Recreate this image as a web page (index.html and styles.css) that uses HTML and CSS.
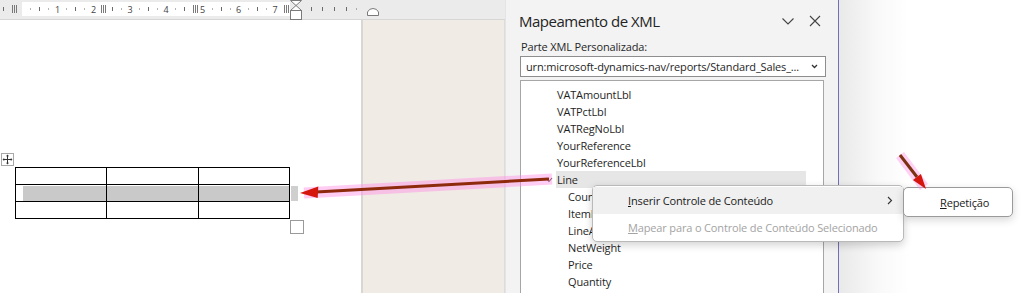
FILE: index.html
```html
<!DOCTYPE html>
<html lang="pt">
<head>
<meta charset="utf-8">
<title>Mapeamento de XML</title>
<link rel="stylesheet" href="styles.css">
</head>
<body>
<div class="app">
  <div class="doc">
    <div class="ruler">
      <svg width="505" height="20" viewBox="0 0 505 20">
        <rect x="0" y="0" width="505" height="20" fill="#ebebeb"/>
        <rect x="22" y="2" width="268" height="14" fill="#ffffff"/>
        <line x1="0" y1="19.5" x2="505" y2="19.5" stroke="#d6d6d6"/>
        <g stroke="#6a6a6a" stroke-width="1">
          <line x1="3.5" y1="7" x2="3.5" y2="11"/>
          <line x1="39.5" y1="7" x2="39.5" y2="11"/>
          <line x1="75.5" y1="7" x2="75.5" y2="11"/>
          <line x1="112.5" y1="7" x2="112.5" y2="11"/>
          <line x1="148.5" y1="7" x2="148.5" y2="11"/>
          <line x1="184.5" y1="7" x2="184.5" y2="11"/>
          <line x1="221.5" y1="7" x2="221.5" y2="11"/>
          <line x1="257.5" y1="7" x2="257.5" y2="11"/>
          <line x1="311.5" y1="7" x2="311.5" y2="11"/>
          <line x1="322.5" y1="7" x2="322.5" y2="11"/>
          <line x1="334.5" y1="7" x2="334.5" y2="11"/>
          <line x1="346.5" y1="7" x2="346.5" y2="11"/>
        </g>
        <g fill="#6a6a6a">
          <rect x="30" y="8.5" width="1" height="1"/>
          <rect x="48" y="8.5" width="1" height="1"/>
          <rect x="66" y="8.5" width="1" height="1"/>
          <rect x="84" y="8.5" width="1" height="1"/>
          <rect x="121" y="8.5" width="1" height="1"/>
          <rect x="139" y="8.5" width="1" height="1"/>
          <rect x="157" y="8.5" width="1" height="1"/>
          <rect x="175" y="8.5" width="1" height="1"/>
          <rect x="212" y="8.5" width="1" height="1"/>
          <rect x="230" y="8.5" width="1" height="1"/>
          <rect x="248" y="8.5" width="1" height="1"/>
          <rect x="266" y="8.5" width="1" height="1"/>
          <rect x="356" y="8.5" width="1" height="1"/>
        </g>
        <g class="rnum">
          <text x="57.5" y="12.5">1</text>
          <text x="93.5" y="12.5">2</text>
          <text x="130" y="12.5">3</text>
          <text x="166" y="12.5">4</text>
          <text x="202.5" y="12.5">5</text>
          <text x="238.5" y="12.5">6</text>
          <text x="275" y="12.5">7</text>
        </g>
        <g fill="#7a7a7a">
          <rect x="12" y="5" width="1" height="8"/><rect x="14" y="5" width="1" height="8"/><rect x="16" y="5" width="1" height="8"/>
          <rect x="101" y="5" width="1" height="8"/><rect x="103" y="5" width="1" height="8"/><rect x="105" y="5" width="1" height="8"/>
          <rect x="193" y="5" width="1" height="8"/><rect x="195" y="5" width="1" height="8"/><rect x="197" y="5" width="1" height="8"/>
          <rect x="284" y="5" width="1" height="8"/><rect x="286" y="5" width="1" height="8"/><rect x="288" y="5" width="1" height="8"/>
        </g>
        <rect x="290.5" y="10.5" width="11" height="9" fill="#ffffff" stroke="#7a7a7a"/>
        <path d="M290.5 0.5 L301.5 0.5 L296 5.5 L301.5 10.5 L290.5 10.5 L296 5.5 Z" fill="#ffffff" stroke="#7a7a7a"/>
        <path d="M367.5 15.5 L367.5 12 Q369 8.5 373 8.5 Q377 8.5 378.5 12 L378.5 15.5 Z" fill="#ffffff" stroke="#7a7a7a"/>
      </svg>
    </div>
    <div class="docbody">
      <div class="page">
        <div class="tablewrap">
          <span class="movehandle">
            <svg width="13" height="13" viewBox="0 0 13 13">
              <rect x="0.5" y="0.5" width="12" height="12" fill="#ffffff" stroke="#a8a8a8"/>
              <path d="M6.5 2 V11 M2 6.5 H11" stroke="#333" stroke-width="1"/>
              <path d="M6.5 1.5 L5 3.2 H8 Z M6.5 11.5 L5 9.8 H8 Z M1.5 6.5 L3.2 5 V8 Z M11.5 6.5 L9.8 5 V8 Z" fill="#333"/>
            </svg>
          </span>
          <table class="wtable">
            <tr><td></td><td></td><td></td></tr>
            <tr class="selrow"><td><div class="sel first"></div></td><td><div class="sel"></div></td><td><div class="sel"></div></td></tr>
            <tr><td></td><td></td><td></td></tr>
          </table>
          <span class="rowend"></span>
          <span class="resize"></span>
        </div>
      </div>
      <div class="gutter"></div>
    </div>
  </div>

  <div class="pane">
    <div class="panehead">
      <span class="panetitle">Mapeamento de XML</span>
      <span class="paneicons">
        <svg width="14" height="10" viewBox="0 0 14 10"><path d="M1.5 2.5 L7 8 L12.5 2.5" fill="none" stroke="#444" stroke-width="1.1"/></svg>
        <svg width="12" height="12" viewBox="0 0 12 12"><path d="M1 1 L11 11 M11 1 L1 11" fill="none" stroke="#444" stroke-width="1.1"/></svg>
      </span>
    </div>
    <div class="partlabel">Parte XML Personalizada:</div>
    <div class="combo">
      <span class="combotext">urn:microsoft-dynamics-nav/reports/Standard_Sales_...</span>
      <svg width="7" height="5" viewBox="0 0 7 5"><path d="M1 1 L3.5 3.5 L6 1" fill="none" stroke="#333" stroke-width="1.3"/></svg>
    </div>
    <div class="tree">
      <div class="node">VATAmountLbl</div>
      <div class="node">VATPctLbl</div>
      <div class="node">VATRegNoLbl</div>
      <div class="node">YourReference</div>
      <div class="node">YourReferenceLbl</div>
      <div class="node parent">
        <svg class="twisty" width="8" height="6" viewBox="0 0 8 6"><path d="M1 1 L4 4.5 L7 1" fill="none" stroke="#333" stroke-width="1.1"/></svg>
        <span class="hl">Line</span>
      </div>
      <div class="node child">Country</div>
      <div class="node child">ItemNo</div>
      <div class="node child">LineAmount</div>
      <div class="node child">NetWeight</div>
      <div class="node child">Price</div>
      <div class="node child">Quantity</div>
    </div>
  </div>

  <div class="rest"></div>

  <div class="menu">
    <div class="mi hover"><span class="acc">Inserir Controle de Conteúdo</span>
      <svg width="6" height="9" viewBox="0 0 6 9"><path d="M1 1 L4.5 4.5 L1 8" fill="none" stroke="#333" stroke-width="1.1"/></svg>
    </div>
    <div class="mi disabled"><span class="acc">Mapear para o Controle de Conteúdo Selecionado</span></div>
  </div>
  <div class="submenu">
    <div class="mi"><span class="acc">Repetição</span></div>
  </div>

  <svg class="arrows" width="1024" height="293" viewBox="0 0 1024 293">
    <line x1="552" y1="179" x2="304" y2="193" stroke="#ff8ee6" stroke-opacity="0.45" stroke-width="11"/>
    <line x1="900" y1="155" x2="924" y2="187" stroke="#ff8ee6" stroke-opacity="0.4" stroke-width="10"/>
    <line x1="549" y1="179" x2="316" y2="192" stroke="#8e2a0c" stroke-width="3"/>
    <polygon points="300,193 318.3,186.5 317.7,198" fill="#d4160c"/>
    <line x1="900" y1="155" x2="917" y2="177" stroke="#7a3210" stroke-width="3"/>
    <polygon points="926,189 912.9,180.1 920.9,174.1" fill="#d4160c"/>
  </svg>
</div>
</body>
</html>
```
FILE: styles.css
```css
* { box-sizing: border-box; }
html, body { margin: 0; padding: 0; }
body {
  width: 1024px;
  height: 293px;
  overflow: hidden;
  background: #ffffff;
  font-family: "Open Sans", "Noto Sans", sans-serif;
  font-size: 11px;
  letter-spacing: -0.15px;
  color: #1f1f1f;
}
.app {
  position: relative;
  display: flex;
  width: 1024px;
  height: 293px;
}
.doc {
  width: 505px;
  display: flex;
  flex-direction: column;
}
.ruler { height: 20px; }
.ruler svg { display: block; }
.rnum text {
  font-family: "Open Sans", sans-serif;
  font-size: 9px;
  fill: #444;
  text-anchor: middle;
}
.docbody {
  flex: 1;
  display: flex;
}
.page {
  width: 361px;
  background: #ffffff;
  padding: 147px 0 0 15px;
}
.gutter {
  flex: 1;
  background: #f0ebe5;
  border-left: 2px solid #d9d7d4;
  border-right: 1px solid #dcdcdc;
}
.tablewrap {
  position: relative;
  width: 276px;
}
.movehandle {
  position: absolute;
  left: -14px;
  top: -14px;
  width: 13px;
  height: 13px;
}
.movehandle svg { display: block; }
.wtable {
  border-collapse: collapse;
  width: 275px;
  table-layout: fixed;
}
.wtable td {
  border: 1px solid #000;
  height: 17px;
  padding: 0;
  width: 91px;
}
.sel {
  height: 15px;
  background: #c9c9c9;
}
.sel.first { margin-left: 7px; }
.rowend {
  position: absolute;
  left: 276px;
  top: 19px;
  width: 7px;
  height: 15px;
  background: #cfcfcf;
}
.resize {
  position: absolute;
  left: 275px;
  top: 53px;
  width: 14px;
  height: 14px;
  background: #fff;
  border: 1px solid #9a9a9a;
}
.pane {
  width: 334px;
  background: #f3f3f3;
  border-left: 1px solid #e4e4e4;
  border-right: 1px solid #7070b8;
  padding: 0 14px 0 13px;
  display: flex;
  flex-direction: column;
}
.panehead {
  height: 40px;
  display: flex;
  align-items: center;
  justify-content: space-between;
  padding-top: 1px;
}
.panetitle {
  font-size: 15px;
  letter-spacing: -0.5px;
  color: #242424;
}
.paneicons {
  display: flex;
  align-items: center;
  gap: 14px;
  padding-right: 3px;
}
.paneicons svg { display: block; }
.partlabel {
  padding-left: 2px;
  height: 16px;
  line-height: 14px;
  color: #262626;
}
.combo {
  margin-left: 1px;
  height: 21px;
  width: 306px;
  background: #fff;
  border: 1px solid #8e8e8e;
  display: flex;
  align-items: center;
  justify-content: space-between;
  padding: 0 7px 0 5px;
}
.combo svg { display: block; }
.tree {
  margin-top: 3px;
  margin-left: 1px;
  width: 304px;
  flex: 1;
  background: #fff;
  border: 1px solid #a6a6a6;
  border-bottom: none;
  padding-top: 5px;
}
.node {
  height: 17px;
  line-height: 17px;
  padding-left: 36px;
  white-space: nowrap;
  color: #1f1f1f;
}
.node.parent {
  position: relative;
  padding-left: 24px;
  display: flex;
  align-items: center;
}
.twisty { display: block; margin-right: 3px; }
.hl {
  display: block;
  width: 250px;
  background: #e6e6e6;
  padding-left: 1px;
}
.node.child { padding-left: 47px; }
.rest {
  flex: 1;
  background: linear-gradient(to right, #e9e9e9, #f9f9f9 40px, #ffffff 70px);
}
.menu {
  position: absolute;
  left: 592px;
  top: 185px;
  width: 312px;
  background: #fff;
  border: 1px solid #b9b9b9;
  border-radius: 5px;
  box-shadow: 0 3px 8px rgba(0,0,0,0.18);
  padding: 1px 0 0 0;
}
.mi {
  height: 27px;
  display: flex;
  align-items: center;
  justify-content: space-between;
  padding: 0 10px 0 35px;
  color: #1a1a1a;
  font-size: 11px;
}
.acc { display: inline-block; }
.acc::first-letter { text-decoration: underline; }
.mi.hover { background: #f0f0f0; }
.mi.disabled { color: #a3a3a3; }
.mi svg { display: block; }
.submenu {
  position: absolute;
  left: 903px;
  top: 187px;
  width: 110px;
  height: 30px;
  background: #fff;
  border: 1px solid #9a9a9a;
  border-radius: 5px;
  box-shadow: 0 3px 8px rgba(0,0,0,0.16);
}
.submenu .mi {
  height: 28px;
  padding-left: 36px;
}
.arrows {
  position: absolute;
  left: 0;
  top: 0;
  pointer-events: none;
}
```
